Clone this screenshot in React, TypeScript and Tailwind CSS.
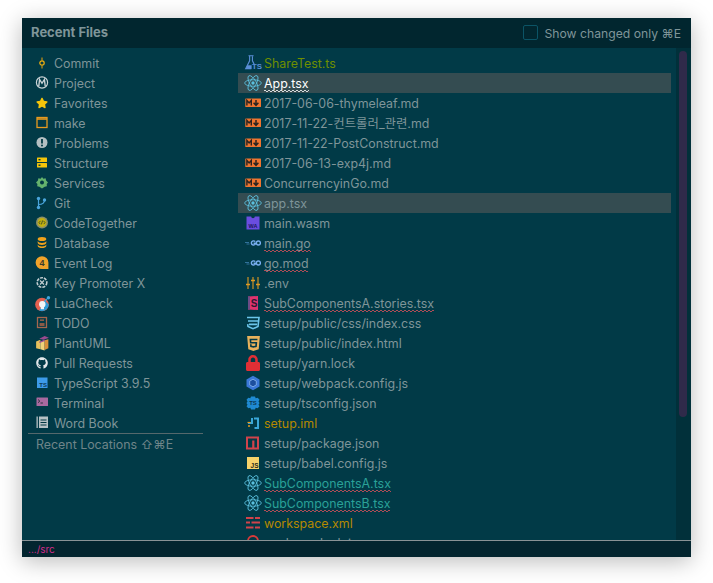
import React from 'react';
import { FaGithub, FaStar, FaHtml5, FaLock } from 'react-icons/fa';

const Svg: React.FC<{ children: React.ReactNode; w?: number; h?: number }> = ({ children, w = 16, h = 16 }) => (
  <svg width={w} height={h} viewBox="0 0 16 16" fill="none">{children}</svg>
);

// side panel icons
const CommitIcon = () => (
  <Svg>
    <path d="M8 2.5v3M8 10.5v3" stroke="#f0a30a" strokeWidth="1" />
    <circle cx="8" cy="8" r="2.2" stroke="#f0b010" strokeWidth="1.2" />
  </Svg>
);
const ProjectIcon = () => (
  <Svg>
    <circle cx="8" cy="7.5" r="5.6" stroke="#c9d3d6" strokeWidth="1.2" />
    <path d="M4.8 11l.8-6.5L8 8.3l2.4-3.8.8 6.5" stroke="#c9d3d6" strokeWidth="1.4" />
  </Svg>
);
const MakeIcon = () => (
  <Svg>
    <rect x="3" y="2.5" width="10" height="10" stroke="#e79a1f" strokeWidth="1.3" />
    <path d="M3 4h10" stroke="#e79a1f" strokeWidth="1.6" />
  </Svg>
);
const ProblemsIcon = () => (
  <Svg>
    <circle cx="8" cy="7.5" r="5.5" fill="#b4bfc2" />
    <path d="M8 4v4.4" stroke="#023843" strokeWidth="1.8" />
    <circle cx="8" cy="10.4" r="1" fill="#023843" />
  </Svg>
);
const StructureIcon = () => (
  <Svg>
    <rect x="3" y="2.5" width="10" height="4.5" rx=".5" fill="#f5c50a" />
    <rect x="3" y="8" width="10" height="4.5" rx=".5" fill="#f5c50a" />
    <rect x="4.5" y="4" width="2" height="1.4" fill="#023843" />
    <rect x="4.5" y="9.5" width="2" height="1.4" fill="#023843" />
  </Svg>
);
const ServicesIcon = () => (
  <Svg>
    <path d="M8 2l1.4 1.7 2.2-.4.5 2.2L14 7.5 12.7 9l.2 2.2-2.2.5L8 13.4l-2.6-1.7-2.2-.5.2-2.2L2 7.5l1.9-2 .5-2.2 2.2.4z" fill="#64b26d" />
    <circle cx="8" cy="7.6" r="2" fill="#023843" />
  </Svg>
);
const GitIcon = () => (
  <Svg>
    <circle cx="4.5" cy="3.5" r="1.7" fill="#4aa5dc" />
    <circle cx="4.5" cy="12.5" r="1.7" fill="#4aa5dc" />
    <circle cx="10.5" cy="5" r="1.7" fill="#4aa5dc" />
    <path d="M4.5 4v8M4.5 9.5c3 0 6-1 6-4.5" stroke="#4aa5dc" strokeWidth="1.2" />
  </Svg>
);
const CodeTogetherIcon = () => (
  <Svg>
    <circle cx="8" cy="7.5" r="6" fill="#8b8f68" />
    <circle cx="8" cy="7.5" r="4.4" fill="#c2b10e" />
    <path d="M6.6 5.8L5 7.5l1.2 1.6M9.4 5.8L11 7.5 9.8 9.1M8.6 5.5L7.4 9.4" stroke="#3c4a2a" strokeWidth=".9" />
  </Svg>
);
const DatabaseIcon = () => (
  <Svg>
    <ellipse cx="8" cy="4" rx="4.3" ry="2" fill="#f0a21c" />
    <path d="M3.7 6c.6 2.6 8 2.6 8.6 0v2c-.6 2.6-8 2.6-8.6 0z" fill="#f0a21c" />
    <path d="M3.7 9.6c.6 2.6 8 2.6 8.6 0v1.4c-.6 2.8-8 2.8-8.6 0z" fill="#f0a21c" />
  </Svg>
);
const EventLogIcon = () => (
  <Svg>
    <path d="M8 1.2a6.4 6.4 0 1 0 0 12.8h6.4V7.6A6.4 6.4 0 0 0 8 1.2z" fill="#f0a32a" />
    <text x="8" y="11" textAnchor="middle" fontSize="9" fontWeight="700" fill="#3a3a2a" fontFamily="Liberation Sans, sans-serif">4</text>
  </Svg>
);
const KeyPromoterIcon = () => (
  <Svg>
    <circle cx="8" cy="7.5" r="4.8" stroke="#c4ced1" strokeWidth="1.6" strokeDasharray="3 1" />
    <path d="M6 5.5l4 4M10 5.5l-4 4" stroke="#c4ced1" strokeWidth="1.2" />
  </Svg>
);
const LuaCheckIcon = () => (
  <Svg w={17} h={17}>
    <circle cx="7.5" cy="9" r="6.4" fill="#e2604f" />
    <path d="M5 14.5a6.4 6.4 0 0 0 8.9-5.5L10 5z" fill="#2e9ad6" />
    <circle cx="7.8" cy="8.6" r="3" fill="#f2f4f5" />
    <rect x="6.4" y="10" width="3" height="3.4" fill="#f2f4f5" />
    <circle cx="13.6" cy="2.6" r="1.6" fill="#3fa5de" />
    <path d="M10 6l3-3" stroke="#3fa5de" strokeWidth="1" />
  </Svg>
);
const TodoIcon = () => (
  <Svg>
    <rect x="3.5" y="2.5" width="9" height="10" stroke="#a5664d" strokeWidth="1.3" />
    <rect x="6" y="4.5" width="4" height="1.3" fill="#a5664d" />
    <rect x="5.5" y="8" width="5" height="3" fill="#8a5a46" />
  </Svg>
);
const PlantUmlIcon = () => (
  <Svg w={17} h={17}>
    <path d="M2 6l4-1.5v9L2 12.5z" fill="#e7c15c" />
    <path d="M6 6.5l4-1.5v9.5l-4-1z" fill="#f0d27a" />
    <path d="M10 5l3.5-1v8.5L10 14z" fill="#d98f3a" />
    <path d="M5 3.5l5-2.5 4 1.5-5 2z" fill="#9b4a8f" />
    <path d="M5 7l5-2" stroke="#a24f96" strokeWidth="1.2" />
  </Svg>
);
const TsBoxIcon = () => (
  <Svg>
    <rect x="3" y="2.5" width="10.5" height="10.5" fill="#3d9be9" />
    <text x="13" y="12" textAnchor="end" fontSize="6" fontWeight="700" fill="#0c3a55" fontFamily="Liberation Sans, sans-serif">TS</text>
  </Svg>
);
const TerminalIcon = () => (
  <Svg>
    <rect x="2.5" y="2.5" width="11.5" height="8.5" rx=".5" fill="#a9699f" />
    <path d="M4 4.5l1.8 1.6L4 7.7" stroke="#1d2b34" strokeWidth=".9" />
    <path d="M6.5 8h2.4" stroke="#1d2b34" strokeWidth=".9" />
  </Svg>
);
const WordBookIcon = () => (
  <Svg>
    <rect x="2.5" y="1.5" width="1.3" height="11.5" fill="#b7c2c5" />
    <rect x="5" y="1.5" width="9" height="11.5" fill="#b7c2c5" />
    <path d="M6.5 5h6M6.5 7.5h6M6.5 10h6" stroke="#023843" strokeWidth="1" />
  </Svg>
);

// file type icons
const ReactIcon = () => (
  <Svg w={18} h={18}>
    <g stroke="#5bc0de" strokeWidth=".75">
      <ellipse cx="8" cy="8" rx="7.4" ry="2.9" />
      <ellipse cx="8" cy="8" rx="7.4" ry="2.9" transform="rotate(60 8 8)" />
      <ellipse cx="8" cy="8" rx="7.4" ry="2.9" transform="rotate(120 8 8)" />
    </g>
    <circle cx="8" cy="8" r="1.5" fill="#5bc0de" />
  </Svg>
);
const MarkdownIcon = () => (
  <Svg>
    <rect x="0.3" y="3.5" width="15.7" height="8.5" rx=".5" fill="#ef7530" />
    <path d="M1.9 10.5V5.3l2.2 2.6 2.2-2.6v5.2" stroke="#2b2320" strokeWidth="1.4" />
    <path d="M11 5v4.6M8.6 7.8l2.4 2.6 2.4-2.6" stroke="#2b2320" strokeWidth="1.5" />
  </Svg>
);
const TestTsIcon = () => (
  <Svg w={18} h={18}>
    <path d="M4 1.5h4.5M5 2v4l-3.5 7h5" stroke="#5a8ed6" strokeWidth="1" />
    <path d="M7.5 2v4l1.5 3" stroke="#5a8ed6" strokeWidth="1" />
    <path d="M3 10l-1.2 3h5v-3z" fill="#5a8ed6" />
    <text x="16" y="13.5" textAnchor="end" fontSize="7" fontWeight="700" fill="#5a8ed6" fontFamily="Liberation Sans, sans-serif">TS</text>
  </Svg>
);
const WasmIcon = () => (
  <Svg>
    <path d="M1.5 1.5h4.7a1.8 1.8 0 0 0 3.6 0h4.7v13h-13z" fill="#6a4de0" />
    <text x="8" y="12.6" textAnchor="middle" fontSize="5.5" fontWeight="700" fill="#1a1860" fontFamily="Liberation Sans, sans-serif">WA</text>
  </Svg>
);
const GoIcon = () => (
  <Svg>
    <path d="M0 7.5h4M1.5 9h3" stroke="#3c7fb0" strokeWidth=".8" />
    <path d="M10.2 6.7a2.1 2.1 0 1 0 .4 1.5H8.6" stroke="#78aef0" strokeWidth="1.4" />
    <circle cx="13.4" cy="8" r="2" stroke="#78aef0" strokeWidth="1.4" />
  </Svg>
);
const EnvIcon = () => (
  <Svg>
    <path d="M3 2v12M8 2v12M13 2v12" stroke="#e09a22" strokeWidth="1.1" />
    <path d="M1 9.5h4M6 5.5h4M11 9.5h4" stroke="#e09a22" strokeWidth="1.5" />
  </Svg>
);
const StorybookIcon = () => (
  <Svg>
    <path d="M3 1.5l10-.5v14l-10-.5z" fill="#e0336f" />
    <path d="M3 1.5h2v13H3z" fill="#6b4c86" />
    <text x="9" y="12" textAnchor="middle" fontSize="10" fontWeight="700" fill="#2a1a30" fontFamily="Liberation Sans, sans-serif">S</text>
  </Svg>
);
const CssIcon = () => (
  <Svg>
    <path d="M2 2.5h12l-1 9-5 2.2-5-2.2-.3-2.3" stroke="#6bc5ea" strokeWidth="1.6" />
    <path d="M3 6h10M4 9.4h8" stroke="#6bc5ea" strokeWidth="1.6" />
  </Svg>
);
const WebpackIcon = () => (
  <Svg>
    <path d="M8 .8l6.5 3.6v7.2L8 15.2l-6.5-3.6V4.4z" fill="#3b78d8" />
    <path d="M8 4.2l3.3 1.9v3.8L8 11.8 4.7 9.9V6.1z" fill="#1d4f9e" stroke="#8ab8ee" strokeWidth=".8" />
  </Svg>
);
const TsConfigIcon = () => (
  <Svg>
    <path d="M6 1.5h4l.7 1.8 2-.5 1.8 2-1 1.7 1 1.5-1 1.7 1 1.6-1.8 2-2-.5L10 14.5H6l-.7-1.7-2 .5-1.8-2 1-1.6-1-1.7 1-1.5-1-1.7 1.8-2 2 .5z" fill="#1f8ad2" />
    <text x="8" y="10.4" textAnchor="middle" fontSize="6" fontWeight="700" fill="#0c3a55" fontFamily="Liberation Sans, sans-serif">TS</text>
  </Svg>
);
const ImlIcon = () => (
  <Svg>
    <path d="M9 2.5h5V14H9.5v-2H12V4.5H9z" fill="#3aa7d8" />
    <path d="M3 7h3V3h2v6H3z" fill="#3aa7d8" />
    <circle cx="4" cy="11" r="1" fill="#e89a1a" />
    <path d="M2.5 7.5h3" stroke="#e89a1a" strokeWidth="1.2" />
  </Svg>
);
const NpmIcon = () => (
  <Svg>
    <rect x="2" y="2.5" width="11" height="11" stroke="#d1434b" strokeWidth="2" />
    <rect x="7.2" y="5.5" width="2.2" height="8" fill="#d1434b" />
  </Svg>
);
const JsIcon = () => (
  <Svg>
    <rect x="2" y="2" width="12" height="12" fill="#f7d26a" />
    <text x="13.5" y="13" textAnchor="end" fontSize="6.5" fontWeight="700" fill="#2b2b1a" fontFamily="Liberation Sans, sans-serif">JS</text>
  </Svg>
);
const WorkspaceIcon = () => (
  <Svg>
    <path d="M1 3h7.5M10 3h5M1 7.5h4M6.5 7.5H15M1 12.5h7.5M10 12.5h5" stroke="#d1434b" strokeWidth="1.8" />
  </Svg>
);
const LockPartialIcon = () => (
  <Svg>
    <path d="M3 7V6a5 5 0 0 1 10 0v1" stroke="#d93a3a" strokeWidth="1.8" />
    <rect x="2" y="7" width="12" height="8" fill="#d93a3a" />
  </Svg>
);

// squiggle under inspected file names
const wavePath = 'M0 2' + ' l1 -1 l1 1 l1 1 l1 -1'.repeat(60);
const Wave: React.FC<{ color: string }> = ({ color }) => (
  <svg className="absolute left-0 bottom-px w-full h-[3px]" fill="none">
    <path d={wavePath} stroke={color} strokeWidth=".8" />
  </svg>
);

const panels: { name: string; icon: React.ReactNode }[] = [
  { name: 'Commit', icon: <CommitIcon /> },
  { name: 'Project', icon: <ProjectIcon /> },
  { name: 'Favorites', icon: <FaStar size={12} className="text-[#f5c50a]" /> },
  { name: 'make', icon: <MakeIcon /> },
  { name: 'Problems', icon: <ProblemsIcon /> },
  { name: 'Structure', icon: <StructureIcon /> },
  { name: 'Services', icon: <ServicesIcon /> },
  { name: 'Git', icon: <GitIcon /> },
  { name: 'CodeTogether', icon: <CodeTogetherIcon /> },
  { name: 'Database', icon: <DatabaseIcon /> },
  { name: 'Event Log', icon: <EventLogIcon /> },
  { name: 'Key Promoter X', icon: <KeyPromoterIcon /> },
  { name: 'LuaCheck', icon: <LuaCheckIcon /> },
  { name: 'TODO', icon: <TodoIcon /> },
  { name: 'PlantUML', icon: <PlantUmlIcon /> },
  { name: 'Pull Requests', icon: <FaGithub size={12} className="text-[#e3e8ea]" /> },
  { name: 'TypeScript 3.9.5', icon: <TsBoxIcon /> },
  { name: 'Terminal', icon: <TerminalIcon /> },
  { name: 'Word Book', icon: <WordBookIcon /> },
];

type FileRow = {
  name: string;
  icon: React.ReactNode;
  color?: string;
  selected?: boolean;
  wave?: string;
};

const files: FileRow[] = [
  { name: 'ShareTest.ts', icon: <TestTsIcon />, color: 'text-[#6f8f00]' },
  { name: 'App.tsx', icon: <ReactIcon />, color: 'text-white', selected: true, wave: '#ffffff' },
  { name: '2017-06-06-thymeleaf.md', icon: <MarkdownIcon /> },
  { name: '2017-11-22-컨트롤러_관련.md', icon: <MarkdownIcon /> },
  { name: '2017-11-22-PostConstruct.md', icon: <MarkdownIcon /> },
  { name: '2017-06-13-exp4j.md', icon: <MarkdownIcon /> },
  { name: 'ConcurrencyinGo.md', icon: <MarkdownIcon /> },
  { name: 'app.tsx', icon: <ReactIcon />, selected: true },
  { name: 'main.wasm', icon: <WasmIcon /> },
  { name: 'main.go', icon: <GoIcon />, wave: '#d9525c' },
  { name: 'go.mod', icon: <GoIcon />, wave: '#d9525c' },
  { name: '.env', icon: <EnvIcon /> },
  { name: 'SubComponentsA.stories.tsx', icon: <StorybookIcon />, wave: '#d9525c' },
  { name: 'setup/public/css/index.css', icon: <CssIcon /> },
  { name: 'setup/public/index.html', icon: <FaHtml5 size={17} className="text-[#e8b25c]" /> },
  { name: 'setup/yarn.lock', icon: <FaLock size={16} className="text-[#e02f35]" /> },
  { name: 'setup/webpack.config.js', icon: <WebpackIcon /> },
  { name: 'setup/tsconfig.json', icon: <TsConfigIcon /> },
  { name: 'setup.iml', icon: <ImlIcon />, color: 'text-[#b58900]' },
  { name: 'setup/package.json', icon: <NpmIcon /> },
  { name: 'setup/babel.config.js', icon: <JsIcon /> },
  { name: 'SubComponentsA.tsx', icon: <ReactIcon />, color: 'text-[#2aa198]', wave: '#d9525c' },
  { name: 'SubComponentsB.tsx', icon: <ReactIcon />, color: 'text-[#2aa198]', wave: '#d9525c' },
  { name: 'workspace.xml', icon: <WorkspaceIcon />, color: 'text-[#b58900]' },
  { name: 'package-lock.json', icon: <LockPartialIcon /> },
];

const App: React.FC = () => {
  return (
    <div className="w-[713px] h-[583px] bg-white pt-[18px] pl-[22px] font-['Inter','Noto_Sans_CJK_KR',sans-serif] text-[12.4px] text-[#7f9599] overflow-hidden">
      <div className="w-[669px] h-[539px] flex flex-col bg-[#013a47] shadow-[0_4px_22px_rgba(0,0,0,0.28)]">
        {/* header */}
        <div className="h-[30px] shrink-0 flex items-center justify-between pl-[9px] pr-[10px] bg-[#01262f]">
          <span className="font-bold text-[13px] text-[#7f9599]">Recent Files</span>
          <div className="flex items-center">
            <span className="w-[15px] h-[15px] mr-[6px] rounded-[2px] border border-[#0b5466]" />
            <span className="text-[12.2px] pt-[2px]">Show changed only ⌘E</span>
          </div>
        </div>

        {/* body */}
        <div className="flex-1 min-h-0 flex">
          <div className="w-[216px] shrink-0 pt-[5px] pl-[6px]">
            {panels.map(p => (
              <div key={p.name} className="h-5 flex items-center">
                <span className="w-[26px] shrink-0 flex items-center justify-center pl-[2px]">{p.icon}</span>
                <span className="pt-[2px]">{p.name}</span>
              </div>
            ))}
            <div className="w-[175px] border-t border-[#55686c] h-0" />
            <div className="h-5 pl-[8px] pt-[2px] flex items-center text-[#6f8589]">Recent Locations ⇧⌘E</div>
          </div>

          <div className="flex-1 min-w-0 pt-[5px] overflow-hidden">
            {files.map(f => (
              <div key={f.name} className={`h-5 w-[433px] flex items-center ${f.selected ? 'bg-[#344c51]' : ''}`}>
                <span className="w-[26px] shrink-0 flex items-center justify-center pl-[4px]">{f.icon}</span>
                <span className={`relative pt-[2px] whitespace-nowrap ${f.color ?? ''}`}>
                  {f.name}
                  {f.wave && <Wave color={f.wave} />}
                </span>
              </div>
            ))}
          </div>

          {/* scrollbar */}
          <div className="w-[15px] shrink-0 bg-[#01303a] pt-[3px] pl-[3px]">
            <div className="w-2 h-[366px] rounded-full bg-[#2f2a4a]" />
          </div>
        </div>

        {/* status line */}
        <div className="h-[17px] shrink-0 border-t border-[#8a9396] bg-[#03252f] pl-[6px] flex items-center text-[10px] text-[#d42a8a]">
          .../src
        </div>
      </div>
    </div>
  );
};

export default App;
